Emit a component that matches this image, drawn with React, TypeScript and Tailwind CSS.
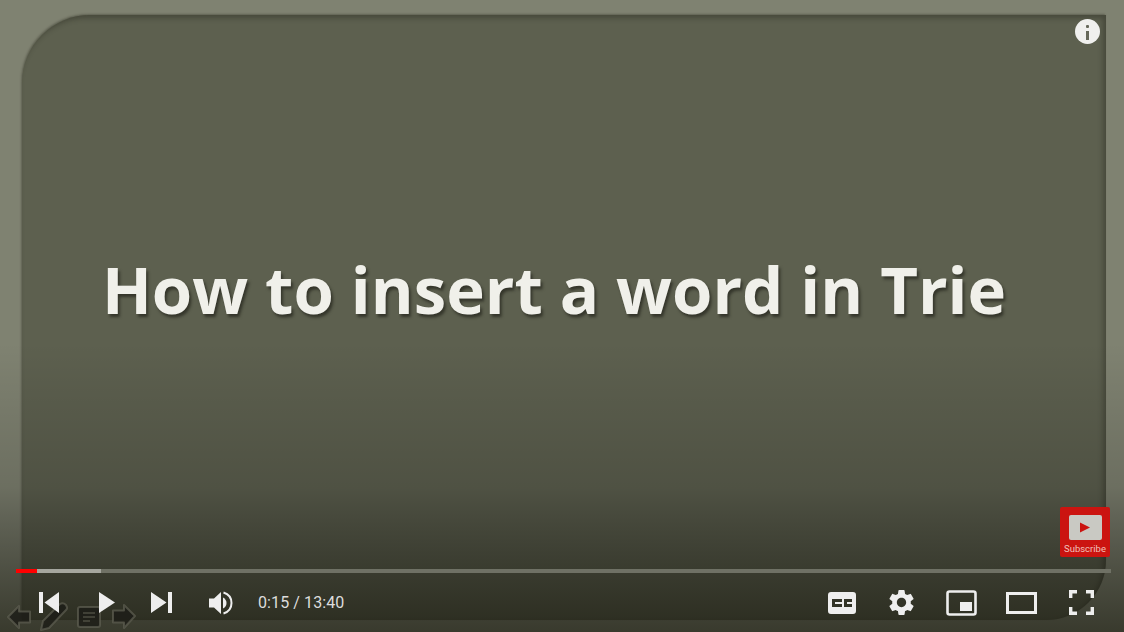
const GEAR =
  "M19.14 12.94c.04-.3.06-.61.06-.94 0-.32-.02-.64-.07-.94l2.03-1.58a.49.49 0 0 0 .12-.61l-1.92-3.32a.488.488 0 0 0-.59-.22l-2.39.96c-.5-.38-1.03-.7-1.62-.94l-.36-2.54a.484.484 0 0 0-.48-.41h-3.84c-.24 0-.43.17-.47.41l-.36 2.54c-.59.24-1.13.57-1.62.94l-2.39-.96c-.22-.08-.47 0-.59.22L2.74 8.87c-.12.21-.08.47.12.61l2.03 1.58c-.05.3-.09.63-.09.94s.02.64.07.94l-2.03 1.58a.49.49 0 0 0-.12.61l1.92 3.32c.12.22.37.29.59.22l2.39-.96c.5.38 1.03.7 1.62.94l.36 2.54c.05.24.24.41.48.41h3.84c.24 0 .44-.17.47-.41l.36-2.54c.59-.24 1.13-.56 1.62-.94l2.39.96c.22.08.47 0 .59-.22l1.92-3.32c.12-.22.07-.47-.12-.61l-2.01-1.58zM12 15.6c-1.98 0-3.6-1.62-3.6-3.6s1.62-3.6 3.6-3.6 3.6 1.62 3.6 3.6-1.62 3.6-3.6 3.6z";

function SlideNav() {
  // faint slideshow buttons baked into the video, sitting under the player controls
  return (
    <svg className="absolute left-0 bottom-0" width="145" height="34" viewBox="0 0 145 34" fill="#1c1c16" fillOpacity="0.8" stroke="#5f6052" strokeOpacity="0.7" strokeWidth="2" strokeLinejoin="round">
      <path d="M8 19 L19 8 V13.5 H30 V24.5 H19 V30 Z" />
      <path d="M41 32 L43 23 L60 6 Q63 4 66 7 Q68 10 66 12 L49 30 Z" />
      <rect x="78" y="9" width="22" height="20" rx="2" />
      <path d="M83 15 H95 M83 19 H95 M83 23 H90" fill="none" strokeWidth="1.5" />
      <path d="M135 18 L124 7 V12.5 H113 V24.5 H124 V30 Z" />
    </svg>
  );
}

function Subscribe() {
  return (
    <div className="absolute left-[1060px] top-[507px] w-[50px] h-[50px] rounded-[2px] bg-[#cb1410] flex flex-col items-center pt-[8px]">
      <div className="w-[33px] h-[25px] rounded-[2px] bg-[#c9c9c3] flex items-center justify-center">
        <svg width="10" height="11" viewBox="0 0 10 11">
          <path d="M0 0.5 L10 5.5 L0 10.5 Z" fill="#cb1410" />
        </svg>
      </div>
      <span className="mt-[3px] text-[9.5px] leading-[12px] text-[#f0c0ba] font-['Roboto',sans-serif]">Subscribe</span>
    </div>
  );
}

function Controls() {
  return (
    <div className="absolute left-0 right-0 bottom-0">
      <div className="mx-[16px] w-[1095px] h-[4px] flex bg-[#6f7165]">
        <div className="w-[21px] bg-[#f00]" />
        <div className="w-[64px] bg-[#a5a69e]" />
      </div>
      <div className="h-[59px] flex items-center text-[#eee]">
        <svg className="ml-[39px]" width="20" height="21" viewBox="0 0 20 21" fill="#eeeeee">
          <path d="M0 0 H4 V21 H0 Z M5.5 10.5 L20 0 V21 Z" />
        </svg>
        <svg className="ml-[40px]" width="16" height="21" viewBox="0 0 16 21" fill="#eeeeee">
          <path d="M0 0 L16 10.5 L0 21 Z" />
        </svg>
        <svg className="ml-[36px]" width="21" height="21" viewBox="0 0 21 21" fill="#eeeeee">
          <path d="M21 0 H17 V21 H21 Z M15.5 10.5 L0 0 V21 Z" />
        </svg>
        <svg className="ml-[37px]" width="24" height="24" viewBox="0 0 24 24" fill="#eeeeee">
          <path d="M0 7.5 H5 L12 1 V23 L5 16.5 H0 Z" />
          <path d="M14 6.5 Q17.5 8.5 17.5 12 Q17.5 15.5 14 17.5 Z" />
          <path d="M14.5 1.5 Q22.5 4 22.5 12 Q22.5 20 14.5 22.5" fill="none" stroke="#eeeeee" strokeWidth="2" />
        </svg>
        <span className="ml-[25px] text-[16px] tracking-[0.1px] text-[#ddd] font-['Roboto',sans-serif]">0:15 / 13:40</span>
        <div className="ml-auto flex items-center">
          <svg width="28" height="22" viewBox="0 0 28 22">
            <path fill="#eeeeee" fillRule="evenodd" d="M3 0 H25 Q28 0 28 3 V19 Q28 22 25 22 H3 Q0 22 0 19 V3 Q0 0 3 0 Z M4 7 V15 H14 V12 H7 V10 H14 V7 Z M16 7 V15 H24 V12 H19 V10 H24 V7 Z" />
          </svg>
          <svg className="ml-[30px]" width="31" height="31" viewBox="0 0 24 24" fill="#eeeeee">
            <path d={GEAR} />
          </svg>
          <svg className="ml-[29px]" width="31" height="26" viewBox="0 0 31 26" fill="none">
            <rect x="1.5" y="1.5" width="28" height="23" rx="2" stroke="#eeeeee" strokeWidth="2.6" />
            <rect x="14" y="12" width="12" height="9" fill="#eeeeee" />
          </svg>
          <svg className="ml-[29px]" width="31" height="22" viewBox="0 0 31 22" fill="none">
            <rect x="1.5" y="1.5" width="28" height="19" stroke="#eeeeee" strokeWidth="3" />
          </svg>
          <svg className="ml-[32px] mr-[30px]" width="25" height="25" viewBox="0 0 25 25" fill="none" stroke="#eeeeee" strokeWidth="3.4">
            <path d="M1.7 8 V1.7 H8 M17 1.7 H23.3 V8 M23.3 17 V23.3 H17 M8 23.3 H1.7 V17" />
          </svg>
        </div>
      </div>
    </div>
  );
}

export default function App() {
  return (
    <div className="relative w-[1124px] h-[632px] overflow-hidden bg-[#7f8271] pt-[15px] pl-[22px] pr-[18px] pb-[12px] font-['Open_Sans',sans-serif]">
      {/* slide panel */}
      <div className="h-full rounded-tl-[68px] rounded-br-[60px] bg-[#5d604f] shadow-[inset_-3px_3px_5px_rgba(30,30,20,0.35),-1px_-1px_2px_rgba(40,40,30,0.35)] flex justify-center pt-[234px] pr-[20px]">
        <h1 className="text-[65.3px] leading-[80px] font-bold text-[#f0f0ea] whitespace-nowrap [text-shadow:2px_3px_3px_rgba(25,25,18,0.6)]">
          How to insert a word in Trie
        </h1>
      </div>

      {/* player bottom shade */}
      <div className="absolute left-0 right-0 bottom-0 h-[290px] bg-gradient-to-b from-transparent via-black/15 to-[#0a0a00]/60" />

      <SlideNav />

      {/* info button */}
      <div className="absolute left-[1075px] top-[19px] w-[25px] h-[25px] rounded-full bg-[#f0f0ee] flex flex-col items-center pt-[6px]">
        <span className="w-[3px] h-[3px] rounded-[1px] bg-[#66685a]" />
        <span className="mt-[3px] w-[3px] h-[9px] bg-[#66685a]" />
      </div>

      <Subscribe />
      <Controls />
    </div>
  );
}
